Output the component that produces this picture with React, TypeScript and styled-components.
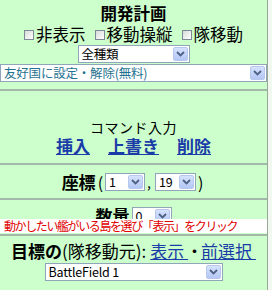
import { createGlobalStyle, styled } from 'styled-components';

const GlobalStyle = createGlobalStyle`
  html, body {
    margin: 0;
    padding: 0;
    background: #f0f8f0;
  }
  body {
    font-family: "Noto Sans CJK JP", "Liberation Sans", sans-serif;
    color: #000;
  }
`;

const CHECK_LIST = ['非表示', '移動操縦', '隊移動'];
const COMMAND_LIST = ['挿入', '上書き', '削除'];

type SelectProps = {
  value: string;
  width: number;
  textColor?: string;
};

const FakeSelect = ({ value, width, textColor }: SelectProps) => {
  return (
    <SelectBox $width={width} $color={textColor}>
      <SelectValue>{value}</SelectValue>
      <DropButton>
        <svg width="9" height="6" viewBox="0 0 9 6">
          <path
            d="M1 1 L4.5 4.5 L8 1"
            fill="none"
            stroke="#4d6185"
            strokeWidth="1.8"
          />
        </svg>
      </DropButton>
    </SelectBox>
  );
};

const App = () => {
  return (
    <>
      <GlobalStyle />
      <Panel>
        <Title>{'開発計画'}</Title>
        <CheckRow>
          {CHECK_LIST.map(label => (
            <CheckItem key={label}>
              <CheckBox />
              {label}
            </CheckItem>
          ))}
        </CheckRow>
        <FakeSelect value="全種類" width={112} />
        <WideSelectRow>
          <FakeSelect
            value="友好国に設定・解除(無料)"
            width={267}
            textColor="#1f7390"
          />
        </WideSelectRow>
        <Divider $top={7} />

        <Caption>{'コマンド入力'}</Caption>
        <LinkRow>
          {COMMAND_LIST.map(label => (
            <CommandLink key={label} href="#">
              {label}
            </CommandLink>
          ))}
        </LinkRow>
        <Divider $top={8} />

        <FormRow $top={8}>
          <Label>{'座標'}</Label>
          <Paren>{'('}</Paren>
          <FakeSelect value="1" width={40} />
          <Comma>{','}</Comma>
          <FakeSelect value="19" width={41} />
          <Paren>{')'}</Paren>
        </FormRow>
        <Divider $top={7} />

        <QuantityRow>
          <Label>{'数量'}</Label>
          <FakeSelect value="0" width={40} />
          <Notice>{'動かしたい艦がいる島を選び「表示」をクリック'}</Notice>
        </QuantityRow>
        <Divider $top={9} />

        <TargetRow>
          <Label>{'目標の'}</Label>
          <TargetNote>{'(隊移動元):'}</TargetNote>
          <TargetLink href="#">{'表示 '}</TargetLink>
          <Dot>{'・'}</Dot>
          <TargetLink href="#">{'前選択 '}</TargetLink>
        </TargetRow>
        <IslandSelectRow>
          <FakeSelect value="BattleField 1" width={178} />
        </IslandSelectRow>
      </Panel>
    </>
  );
};

export default App;

const Panel = styled.main`
  display: flex;
  flex-direction: column;
  align-items: center;
  width: 267px;
  height: 290px;
  background: #ccffcc;
  border-right: 1px solid #9aa89a;
  overflow: hidden;
`;

const Title = styled.h1`
  margin: 4px 0 0;
  font-size: 16.5px;
  line-height: 18px;
  font-weight: 700;
`;

const CheckRow = styled.div`
  display: flex;
  align-items: center;
  gap: 9px;
  height: 21px;
  margin-top: 2px;
  font-size: 16.5px;
  line-height: 21px;
`;

const CheckItem = styled.label`
  display: flex;
  align-items: center;
  gap: 2px;
`;

const CheckBox = styled.span`
  width: 10px;
  height: 10px;
  box-sizing: border-box;
  border: 1px solid #7c8a96;
  background: linear-gradient(135deg, #d8dcd8, #ffffff);
`;

const SelectBox = styled.div<{ $width: number; $color?: string }>`
  display: flex;
  align-items: center;
  box-sizing: border-box;
  width: ${props => props.$width}px;
  height: 18px;
  border: 1px solid #8fa5b8;
  background: #ffffff;
  color: ${props => props.$color || '#000'};
  font-size: 12.5px;
  line-height: 16px;
  padding-left: 3px;
`;

const SelectValue = styled.span`
  flex: 1;
  white-space: nowrap;
  letter-spacing: -0.2px;
`;

const DropButton = styled.span`
  display: flex;
  align-items: center;
  justify-content: center;
  box-sizing: border-box;
  width: 15px;
  height: 14px;
  margin-right: 1px;
  border: 1px solid #b7c8ef;
  border-radius: 2px;
  background: linear-gradient(#d6e2fd, #b4c7f4);
`;

const WideSelectRow = styled.div`
  align-self: stretch;
  margin-top: 1px;
`;

const Divider = styled.hr<{ $top: number }>`
  align-self: stretch;
  height: 2px;
  margin: ${props => props.$top}px 0 0;
  border: none;
  background: #a2b8a8;
`;

const Caption = styled.div`
  margin-top: 28px;
  font-size: 14px;
  line-height: 17px;
  letter-spacing: 0.5px;
`;

const LinkRow = styled.div`
  display: flex;
  gap: 18px;
  font-size: 17px;
  line-height: 19px;
`;

const CommandLink = styled.a`
  color: #1a3ca8;
  font-weight: 700;
  text-decoration: underline;
`;

const FormRow = styled.div<{ $top: number }>`
  display: flex;
  align-items: center;
  height: 18px;
  margin-top: ${props => props.$top}px;
  font-size: 17px;
`;

const Label = styled.span`
  font-weight: 700;
  font-size: 17px;
  line-height: 18px;
`;

const Paren = styled.span`
  margin: 0 2px;
  font-size: 16px;
`;

const Comma = styled.span`
  margin: 0 4px 0 2px;
  font-size: 14px;
  align-self: flex-end;
  line-height: 18px;
`;

const QuantityRow = styled.div`
  position: relative;
  align-self: stretch;
  display: flex;
  justify-content: center;
  align-items: center;
  gap: 2px;
  height: 18px;
  margin-top: 7px;
`;

const Notice = styled.div`
  position: absolute;
  left: 0;
  right: 0;
  top: 12px;
  height: 14px;
  padding-left: 4px;
  background: #ffffff;
  color: #e00000;
  font-size: 12px;
  line-height: 14px;
  letter-spacing: -1.4px;
  white-space: nowrap;
`;

const TargetRow = styled.div`
  display: flex;
  align-items: baseline;
  height: 20px;
  margin-top: 5px;
  font-size: 17px;
  line-height: 20px;
`;

const TargetNote = styled.span`
  margin-right: 4px;
`;

const TargetLink = styled.a`
  color: #1a3ca8;
  text-decoration: underline;
  white-space: pre;
`;

const Dot = styled.span`
  margin: 0 -2px;
`;

const IslandSelectRow = styled.div`
  margin-top: 2px;
`;
